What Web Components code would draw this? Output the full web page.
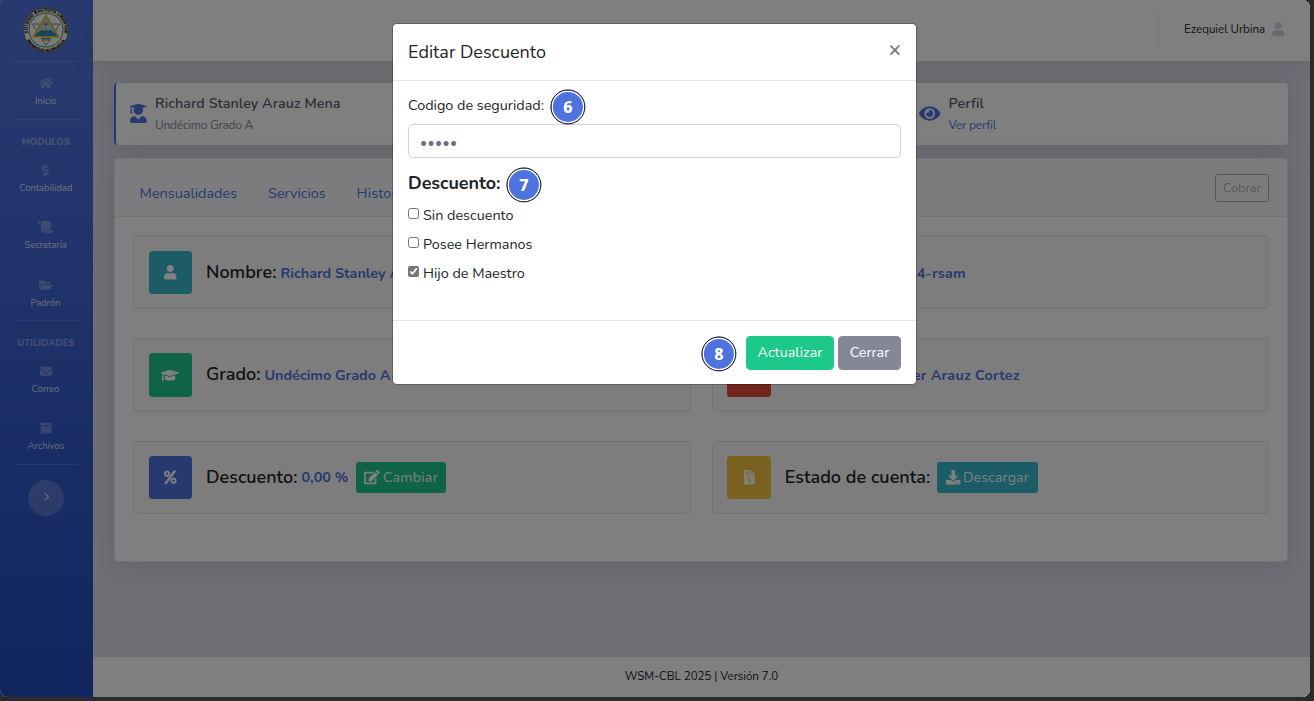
<!DOCTYPE html>
<html lang="es">
<head>
<meta charset="utf-8">
<title>WSM-CBL</title>
<style>
html,body{margin:0;height:100%;background:#2b2b2b;overflow:hidden}
body{font-family:Nunito,Lato,"Noto Sans",sans-serif;font-size:14.4px;color:#212529}
</style>
</head>
<body>
<app-window></app-window>
<script>
const P={
home:[576,'M280.37 148.26L96 300.11V464a16 16 0 0 0 16 16l112.06-.29a16 16 0 0 0 15.92-16V368a16 16 0 0 1 16-16h64a16 16 0 0 1 16 16v95.64a16 16 0 0 0 16 16.05L464 480a16 16 0 0 0 16-16V300L295.67 148.26a12.19 12.19 0 0 0-15.3 0zM571.6 251.47L488 182.56V44.05a12 12 0 0 0-12-12h-56a12 12 0 0 0-12 12v72.61L318.47 43a48 48 0 0 0-61 0L4.34 251.47a12 12 0 0 0-1.6 16.9l25.5 31A12 12 0 0 0 45.15 301l235.22-193.74a12.19 12.19 0 0 1 15.3 0L530.9 301a12 12 0 0 0 16.9-1.6l25.5-31a12 12 0 0 0-1.7-16.93z'],
dollar:[288,'M209.2 233.4l-108-31.6C88.7 198.2 80 186.5 80 173.5c0-16.3 13.2-29.5 29.5-29.5h66.3c12.2 0 24.2 3.7 34.2 10.5 6.1 4.1 14.3 3.1 19.5-2l34.8-34c7.1-6.9 6.1-18.4-1.8-24.5C238 74.8 207.4 64.1 176 64V16c0-8.8-7.2-16-16-16h-32c-8.8 0-16 7.2-16 16v48h-2.5C45.8 64-5.4 118.7.5 183.6c4.2 46.1 39.4 83.6 83.8 96.6l102.5 30c12.5 3.7 21.2 15.3 21.2 28.3 0 16.3-13.2 29.5-29.5 29.5h-66.3C100 368 88 364.3 78 357.5c-6.1-4.1-14.3-3.1-19.5 2l-34.8 34c-7.1 6.9-6.1 18.4 1.8 24.5 24.5 19.2 55.1 29.9 86.5 30v48c0 8.8 7.2 16 16 16h32c8.8 0 16-7.2 16-16v-48.2c46.6-.9 90.3-28.6 105.7-72.7 21.5-61.6-14.6-124.8-72.5-141.7z'],
scroll:[640,'M48 0C21.53 0 0 21.53 0 48v64c0 8.84 7.16 16 16 16h80V48C96 21.53 74.47 0 48 0zm208 412.57V352h288V96c0-52.94-43.06-96-96-96H111.59C121.74 13.41 128 29.92 128 48v368c0 38.87 34.65 69.65 74.75 63.12C234.22 474 256 444.46 256 412.57zM288 384v32c0 52.93-43.06 96-96 96h336c61.86 0 112-50.14 112-112 0-8.84-7.16-16-16-16H288z'],
folder:[576,'M572.694 292.093L500.27 416.248A63.997 63.997 0 0 1 444.989 448H45.025c-18.523 0-30.064-20.093-20.731-36.093l72.424-124.155A64 64 0 0 1 152 256h399.964c18.523 0 30.064 20.093 20.73 36.093zM152 224h328v-48c0-26.51-21.49-48-48-48H272l-64-64H48C21.49 64 0 85.49 0 112v278.046l69.077-118.418C86.214 242.25 117.989 224 152 224z'],
mail:[512,'M502.3 190.8c3.9-3.1 9.7-.2 9.7 4.7V400c0 26.5-21.5 48-48 48H48c-26.5 0-48-21.5-48-48V195.6c0-5 5.7-7.8 9.7-4.7 22.4 17.4 52.1 39.5 154.1 113.6 21.1 15.4 56.7 47.8 92.2 47.6 35.7.3 72-32.8 92.3-47.6 102-74.1 131.6-96.3 154-113.7zM256 320c23.2.4 56.6-29.2 73.4-41.4 132.7-96.3 142.8-104.7 173.4-128.7 5.8-4.5 9.2-11.5 9.2-18.9v-19c0-26.5-21.5-48-48-48H48c-26.5 0-48 21.5-48 48v19c0 7.4 3.4 14.3 9.2 18.9 30.6 23.9 40.7 32.4 173.4 128.7 16.8 12.2 50.2 41.8 73.4 41.4z'],
archive:[512,'M32 448c0 17.7 14.3 32 32 32h384c17.7 0 32-14.3 32-32V160H32v288zm160-212c0-6.6 5.4-12 12-12h104c6.6 0 12 5.4 12 12v8c0 6.6-5.4 12-12 12H204c-6.6 0-12-5.4-12-12v-8zM480 32H32C14.3 32 0 46.3 0 64v48c0 8.8 7.2 16 16 16h480c8.8 0 16-7.2 16-16V64c0-17.7-14.3-32-32-32z'],
user:[448,'M224 256c70.7 0 128-57.3 128-128S294.7 0 224 0 96 57.3 96 128s57.3 128 128 128zm89.6 32h-16.7c-22.2 10.2-46.9 16-72.9 16s-50.6-5.8-72.9-16h-16.7C60.2 288 0 348.2 0 422.4V464c0 26.5 21.5 48 48 48h352c26.5 0 48-21.5 48-48v-41.6c0-74.2-60.2-134.4-134.4-134.4z'],
student:[448,'M319.4 320.6L224 416l-95.4-95.4C57.1 323.7 0 382.2 0 454.4v9.6c0 26.5 21.5 48 48 48h352c26.5 0 48-21.5 48-48v-9.6c0-72.2-57.1-130.7-128.6-133.8zM13.6 79.8l6.4 1.5v58.4c-7 4.2-12 11.5-12 20.3 0 8.4 4.6 15.4 11.1 19.7L3.5 242c-1.7 6.9 2.1 14 7.6 14h41.8c5.5 0 9.3-7.1 7.6-14l-15.6-62.3C51.4 175.4 56 168.4 56 160c0-8.8-5-16.1-12-20.3V87.1l66 15.9c-8.6 17.2-14 36.4-14 57 0 70.7 57.3 128 128 128s128-57.3 128-128c0-20.6-5.3-39.8-14-57l96.3-23.2c18.2-4.4 18.2-27.1 0-31.5l-190.4-46c-13-3.1-26.7-3.1-39.7 0L13.6 48.2c-18.1 4.4-18.1 27.2 0 31.6z'],
cap:[640,'M622.34 153.2L343.4 67.5c-15.2-4.67-31.6-4.67-46.79 0L17.66 153.2c-23.54 7.23-23.54 38.36 0 45.59l48.63 14.94c-10.67 13.19-17.23 29.28-17.88 46.9C38.78 266.15 32 276.11 32 288c0 10.78 5.68 19.85 13.86 25.65L20.33 428.53C18.11 438.52 25.71 448 35.94 448h56.11c10.24 0 17.84-9.48 15.62-19.47L82.14 313.65C90.32 307.85 96 298.78 96 288c0-11.57-6.47-21.25-15.66-26.87.76-15.02 8.44-28.3 20.69-36.72L296.6 284.5c9.06 2.78 26.44 6.25 46.79 0l278.95-85.7c23.55-7.24 23.55-38.36 0-45.6zM352.79 315.09c-28.53 8.76-52.84 3.92-65.59 0l-145.02-44.55L128 384c0 35.35 85.96 64 192 64s192-28.65 192-64l-14.18-113.47-145.03 44.56z'],
eye:[576,'M572.52 241.4C518.29 135.59 410.93 64 288 64S57.68 135.64 3.48 241.41a32.35 32.35 0 0 0 0 29.19C57.71 376.41 165.07 448 288 448s230.32-71.64 284.52-177.41a32.35 32.35 0 0 0 0-29.19zM288 400a144 144 0 1 1 144-144 143.93 143.93 0 0 1-144 144zm0-240a95.31 95.31 0 0 0-25.31 3.79 47.85 47.85 0 0 1-66.9 66.9A95.78 95.78 0 1 0 288 160z'],
edit:[576,'M402.6 83.2l90.2 90.2c3.8 3.8 3.8 10 0 13.8L274.4 405.6l-92.8 10.3c-12.4 1.4-22.9-9.1-21.5-21.5l10.3-92.8L388.8 83.2c3.8-3.8 10-3.8 13.8 0zm162-22.9l-48.8-48.8c-15.2-15.2-39.9-15.2-55.2 0l-35.4 35.4c-3.8 3.8-3.8 10 0 13.8l90.2 90.2c3.8 3.8 10 3.8 13.8 0l35.4-35.4c15.2-15.3 15.2-40 0-55.2zM384 346.2V448H64V128h229.8c3.2 0 6.2-1.3 8.5-3.5l40-40c7.6-7.6 2.2-20.5-8.5-20.5H48C21.5 64 0 85.5 0 112v352c0 26.5 21.5 48 48 48h352c26.5 0 48-21.5 48-48V306.2c0-10.7-12.9-16-20.5-8.5l-40 40c-2.2 2.3-3.5 5.3-3.5 8.5z'],
download:[512,'M216 0h80c13.3 0 24 10.7 24 24v168h87.7c17.8 0 26.7 21.5 14.1 34.1L269.7 378.3c-7.5 7.5-19.8 7.5-27.3 0L90.1 226.1c-12.6-12.6-3.7-34.1 14.1-34.1H192V24c0-13.3 10.7-24 24-24zm296 376v112c0 13.3-10.7 24-24 24H24c-13.3 0-24-10.7-24-24V376c0-13.3 10.7-24 24-24h146.7l49 49c20.1 20.1 52.5 20.1 72.6 0l49-49H488c13.3 0 24 10.7 24 24zm-124 88c0-11-9-20-20-20s-20 9-20 20 9 20 20 20 20-9 20-20zm64 0c0-11-9-20-20-20s-20 9-20 20 9 20 20 20 20-9 20-20z'],
percent:[448,'M109 22a112 112 0 1 0 .1 0zM109 92a42 42 0 1 1-.1 0zM339 266a112 112 0 1 0 .1 0zM339 336a42 42 0 1 1-.1 0zM350 16h70c14 0 20 14 12 25L106 482c-5 8-12 14-22 14H28c-14 0-20-14-12-25L332 30c5-8 10-14 18-14z'],
invoice:[384,'M24 0h200v136c0 13 11 24 24 24h136v328c0 13-11 24-24 24H24c-13 0-24-11-24-24V24C0 11 11 0 24 0zM64 64v32h96V64zM64 128v32h96v-32zM256 0l128 128H256zM176 232v24c-28 2-48 20-48 45 0 57 90 37 90 66 0 20-40 20-60 3l-22 25c12 10 25 15 40 16v25h32v-25c28-2 48-20 48-45 0-57-90-39-90-66 0-18 36-17 54-4l20-25c-10-8-22-13-32-14v-25z'],
next:[256,'M10 85L75 20 265 215Q300 256 265 297L75 492l-65-65L172 256z'],
close:[352,'M312 68l48 48L224 256l136 140-48 48L176 304 40 444l-48-48 136-140L-8 116l48-48 136 140z']
};
const runs=[];
function element(name,css,html){
  customElements.define(name,class extends HTMLElement{
    connectedCallback(){
      if(this.shadowRoot)return;
      this.attachShadow({mode:'open'}).innerHTML='<style>*{box-sizing:border-box}'+css+'</style>'+(typeof html==='function'?html(this):html);
    }
  });
}
const A=(e,n,d='')=>e.getAttribute(n)||d;

/* Single-line text tracked to a given advance width. */
customElements.define('text-run',class extends HTMLElement{
  connectedCallback(){
    if(this.shadowRoot)return;
    this.attachShadow({mode:'open'}).innerHTML='<style>:host{display:inline-block;flex:none;white-space:nowrap;width:'+A(this,'w')+'px}span{display:inline-block}</style><span><slot></slot></span>';
    runs.push(this);
  }
  fit(){
    const s=this.shadowRoot.querySelector('span'),n=this.textContent.length;
    s.style.letterSpacing=((+A(this,'w')-s.getBoundingClientRect().width)/n).toFixed(3)+'px';
  }
});
element('fa-icon',':host{display:inline-flex;flex:none}svg{display:block;fill:currentColor;overflow:visible}',e=>{
  const [w,d]=P[A(e,'name')],h=+A(e,'h');
  return `<svg width="${w/512*h}" height="${h}" viewBox="0 0 ${w} 512"><path fill-rule="evenodd" d="${d}"/></svg>`;
});
element('school-seal',':host{display:block;width:46px;height:46px}svg{display:block;overflow:visible}',`
<svg width="46" height="46" viewBox="0 0 46 46"><defs><path id="top" d="M6.5 31.5A18.6 18.6 0 1 1 39.5 31.5"/><path id="bot" d="M2.2 29A21.6 21.6 0 0 0 43.8 29"/></defs>
<circle cx="23" cy="23" r="22.3" fill="#f4f3f0" stroke="#5c6152" stroke-width=".8"/>
<circle cx="23" cy="23" r="17" fill="#f7f6f4" stroke="#397f70" stroke-width="1"/>
<g font-family="Liberation Sans" font-weight="700" fill="#111" stroke="#111" stroke-width=".2"><text font-size="4.3"><textPath href="#top" startOffset="50%" text-anchor="middle">COLEGIO BAUTISTA LIBERTAD</textPath></text><text font-size="4"><textPath href="#bot" startOffset="50%" text-anchor="middle">MANAGUA NICARAGUA</textPath></text></g>
<g fill="none" stroke="#65665d" stroke-width=".8"><path d="M9.5 17h8l-4 7zM28.5 17h8l-4 7zM19 33h8l-4 5z"/></g>
<path d="M23 8.5L35.5 29.7h-25z" fill="#a9d5ea" stroke="#d6b629" stroke-width="1.6"/>
<path d="M19.5 17a4 4 0 0 1 7 0l-1 1.3a3 3 0 0 0-5 0z" fill="#dd9b4a"/>
<path d="M16 24.5l3-1.5 2 1 2-1.5 2 1.5 2-1 3 1.5 1 2H15z" fill="#47894c"/><path d="M14 25.5h18l2 3.4H12z" fill="#2f8fc0"/><circle cx="23" cy="17.4" r="1.2" fill="#d44"/><path d="M18 31.7h10" stroke="#555" stroke-width="1"/>
</svg>`);
element('nav-item',':host{display:flex;flex-direction:column;align-items:center;height:57.4px;padding-top:14px;font-size:9.4px;color:rgba(255,255,255,.8)}fa-icon{height:15px;align-items:center;color:rgba(255,255,255,.3)}text-run{line-height:14px;margin-top:3.4px}',
 e=>`<fa-icon name="${A(e,'icon')}" h="${A(e,'h','12.2')}"></fa-icon><text-run w="${A(e,'w')}"><slot></slot></text-run>`);
element('nav-heading',':host{display:flex;justify-content:center;height:28.5px;padding-top:15.1px;line-height:14px;font-size:9.4px;font-weight:800;color:rgba(255,255,255,.4)}','<slot></slot>');
element('nav-sidebar',`:host{display:flex;flex-direction:column;width:93px;flex:none;background:linear-gradient(180deg,#4e73df 10%,#224abe 100%)}
school-seal{margin:6.5px 0 0 22.5px}nav{display:flex;flex-direction:column;width:91.4px}hr{width:65px;height:1px;border:0;margin:0 auto;background:rgba(255,255,255,.15);flex:none}
.first{margin-top:8.5px}button{all:unset;display:flex;align-items:center;justify-content:center;width:36px;height:36px;border-radius:50%;margin:15.5px auto 0;background:rgba(255,255,255,.2);color:rgba(255,255,255,.55)}button fa-icon{margin:-2px 0 0 2px}`,
`<school-seal></school-seal><nav><hr class="first"><nav-item icon="home" w="21.5" style="height:56.9px">Inicio</nav-item><hr>
<nav-heading><text-run w="48">MODULOS</text-run></nav-heading>
<nav-item icon="dollar" w="53">Contabilidad</nav-item><nav-item icon="scroll" w="42">Secretaría</nav-item><nav-item icon="folder" w="30.5">Padrón</nav-item><hr style="margin-top:-.8px">
<nav-heading><text-run w="57">UTILIDADES</text-run></nav-heading><nav-item icon="mail" w="28.5">Correo</nav-item><nav-item icon="archive" w="36">Archivos</nav-item><hr style="margin-top:-.5px"><button><fa-icon name="next" h="9.5"></fa-icon></button></nav>`);
element('top-bar',`:host{display:flex;justify-content:flex-end;align-items:center;height:61px;flex:none;padding:0 25.5px 3px 0;background:#fff;box-shadow:0 2.2px 25px rgba(58,59,69,.15);position:relative;font-size:11.6px}i{width:1px;height:35px;background:#e3e6f0;margin-right:25px}fa-icon{margin-left:7px;color:#d1d3e2}`,
'<i></i><text-run w="81">Ezequiel Urbina</text-run><fa-icon name="user" h="14.2"></fa-icon>');
element('student-summary',`:host{display:flex;height:62px;flex:none;background:#fff;border-left:2px solid #4e73df;border-radius:4px;box-shadow:0 2.2px 25px rgba(58,59,69,.15);color:#5a5c69}
div{display:flex;align-items:center;padding-left:14px}.a{width:788.5px}b{font-weight:600;line-height:20px}section{display:flex;flex-direction:column;font-size:12px;color:#858796}section b{font-size:14.2px;color:#5a5c69;height:21px}p{margin:0;line-height:20px}.l{color:#4e73df}fa-icon{color:#4e73df;margin-bottom:2px}`,
`<div class="a"><fa-icon name="student" h="19"></fa-icon><section style="margin-left:8.4px"><b><text-run w="185.5">Richard Stanley Arauz Mena</text-run></b><p><text-run w="98">Undécimo Grado A</text-run></p></section></div><div><fa-icon name="eye" h="19"></fa-icon><section style="margin-left:8.6px"><b><text-run w="35.5">Perfil</text-run></b><p class="l"><text-run w="47.5">Ver perfil</text-run></p></section></div>`);
element('info-tile',`:host{display:flex;align-items:center;height:73.8px;padding:0 14.6px;border:1px solid #e3e6f0;border-radius:4px;font-size:18px;background:#fbfbfb}
.i{display:flex;align-items:center;justify-content:center;width:43.4px;height:43.4px;border-radius:3.5px;color:#fff;background:var(--c);margin-right:14px}
::slotted(text-run){line-height:24px;font-weight:600;position:relative;top:-.4px}::slotted(.v){font-size:14.4px;font-weight:700;color:#4e73df;top:.5px}`,e=>`<div class="i"><fa-icon name="${A(e,'icon')}" h="14.4"></fa-icon></div><slot></slot>`);
element('action-button',`:host{display:flex;align-items:center;justify-content:center;gap:3px;flex:none;height:31px;border-radius:3px;color:#fff;font-size:14.2px;background:var(--c)}`,'<slot></slot>');
element('account-panel',`:host{display:block;height:403.6px;flex:none;background:#fff;border:1px solid #e3e6f0;border-radius:5px;box-shadow:0 2.2px 25px rgba(58,59,69,.15)}
header{display:flex;align-items:center;height:58px;padding:10px 18px 0 24.6px;background:#f8f9fc;border-bottom:1px solid #e3e6f0;color:#4e73df;gap:31px}
button{all:unset;box-sizing:border-box;margin:-10px 0 0 auto;width:54px;height:28px;border:1px solid #858796;border-radius:3px;text-align:center;line-height:24px;font-size:12.7px;color:#858796;opacity:.65}
main{display:grid;grid-template-columns:558px 557px;column-gap:20.8px;row-gap:28.8px;padding:18.4px 18px}`,
`<header><text-run w="97.5">Mensualidades</text-run><text-run w="57.5">Servicios</text-run><text-run w="56">Historial</text-run><button><text-run w="38">Cobrar</text-run></button></header>
<main><info-tile icon="user" style="--c:#36b9cc"><text-run w="70.5">Nombre:</text-run><text-run class="v" w="188.5" style="margin-left:4px">Richard Stanley Arauz Mena</text-run></info-tile>
<info-tile icon="user" style="--c:#4e73df"><text-run w="68">Código:</text-run><text-run class="v" w="75.5" style="margin-left:37.5px">2024-rsam</text-run></info-tile>
<info-tile icon="cap" style="--c:#1cc88a"><text-run w="54.5">Grado:</text-run><text-run class="v" w="126" style="margin-left:4px">Undécimo Grado A</text-run></info-tile>
<info-tile icon="user" style="--c:#e74a3b"><text-run w="52">Tutor:</text-run><text-run class="v" w="132" style="margin-left:51px">Javier Arauz Cortez</text-run></info-tile>
<info-tile icon="percent" style="--c:#4e73df"><text-run w="91.5">Descuento:</text-run><text-run class="v" w="47" style="margin-left:4px;top:-.4px">0,00 %</text-run><action-button style="--c:#1cc88a;width:90px;margin-left:7.5px"><fa-icon name="edit" h="14.2"></fa-icon><text-run w="55">Cambiar</text-run></action-button></info-tile>
<info-tile icon="invoice" style="--c:#f6c23e"><text-run w="145.5">Estado de cuenta:</text-run><action-button style="--c:#36b9cc;width:101px;margin-left:6.5px"><fa-icon name="download" h="14.4"></fa-icon><text-run w="66">Descargar</text-run></action-button></info-tile></main>`);
element('step-badge',`:host{position:absolute;display:flex;align-items:center;justify-content:center;width:35px;height:35px;border-radius:50%;background:#4e73df;border:1.5px solid #151515;box-shadow:inset 0 0 0 1.5px #fff;color:#fff;font:800 16px/1 "Noto Sans",sans-serif;transform:translate(.4px,.4px)}`,'<slot></slot>');
element('check-option',`:host{display:flex;align-items:flex-start;height:29px}input{width:11px;height:11px;margin:3.5px 4px 0 0;accent-color:#767676}text-run{line-height:21px;margin-top:.5px}`,e=>`<input type="checkbox"${e.hasAttribute('checked')?' checked':''}><text-run w="${A(e,'w')}"><slot></slot></text-run>`);
element('discount-modal',`:host{position:absolute;left:393px;top:24px;width:523px;height:360px;display:flex;flex-direction:column;background:#fff;border-radius:4px;box-shadow:0 0 0 1px rgba(0,0,0,.25)}
header{display:flex;justify-content:space-between;height:57px;padding:15px 16px 0 15px;border-bottom:1px solid #e3e6f0;font-size:18px;line-height:26px}header fa-icon{color:#7c7c7c;margin-top:4px;height:14px}
main{height:239px;padding:14px 15px 0}label{display:block;line-height:21px;height:29px}.f{display:flex;align-items:center;height:34px;border:1px solid #d1d3e2;border-radius:5px;padding:2px 11px 0;color:#6e707e;font-size:13.6px}
h5{margin:14px 0 10.5px;font-size:18px;line-height:22px;font-weight:700}
footer{display:flex;justify-content:flex-end;gap:4px;border-top:1px solid #e3e6f0;padding:15px 15px 0}action-button{height:34px;border-radius:4.5px;padding-bottom:1px}`,
`<header><text-run w="138">Editar Descuento</text-run><fa-icon name="close" h="14.2"></fa-icon></header>
<main><label><text-run w="136">Codigo de seguridad:</text-run></label><div class="f"><text-run w="37.5">•••••</text-run></div><h5><text-run w="92.5">Descuento:</text-run></h5>
<check-option w="91">Sin descuento</check-option><check-option w="109.5">Posee Hermanos</check-option><check-option w="102" checked>Hijo de Maestro</check-option></main>
<footer><action-button style="--c:#1cc88a;width:88px"><text-run w="65">Actualizar</text-run></action-button><action-button style="--c:#858796;width:63px"><text-run w="39.5">Cerrar</text-run></action-button></footer>
<step-badge style="left:157px;top:65px">6</step-badge><step-badge style="left:113px;top:143px">7</step-badge><step-badge style="left:308px;top:312px">8</step-badge>`);
element('app-window',`:host{display:flex;position:relative;width:1310px;height:697px;border-radius:4px 8px 8px 8px;overflow:hidden;background:#dddfeb}
.page{flex:1;display:flex;flex-direction:column}.body{flex:1;display:flex;flex-direction:column;gap:13px;padding:22px 22px 0 21px}
footer{height:40px;flex:none;background:#fff;display:flex;align-items:center;justify-content:center;font-size:11.5px;padding-bottom:2px}.shade{position:absolute;inset:0;background:rgba(0,0,0,.5)}`,
`<nav-sidebar></nav-sidebar><div class="page"><top-bar></top-bar><div class="body"><student-summary></student-summary><account-panel></account-panel></div><footer><text-run w="153.5">WSM-CBL 2025 | Versión 7.0</text-run></footer></div><div class="shade"></div><discount-modal></discount-modal>`);
runs.forEach(r=>r.fit());
</script>
</body>
</html>
